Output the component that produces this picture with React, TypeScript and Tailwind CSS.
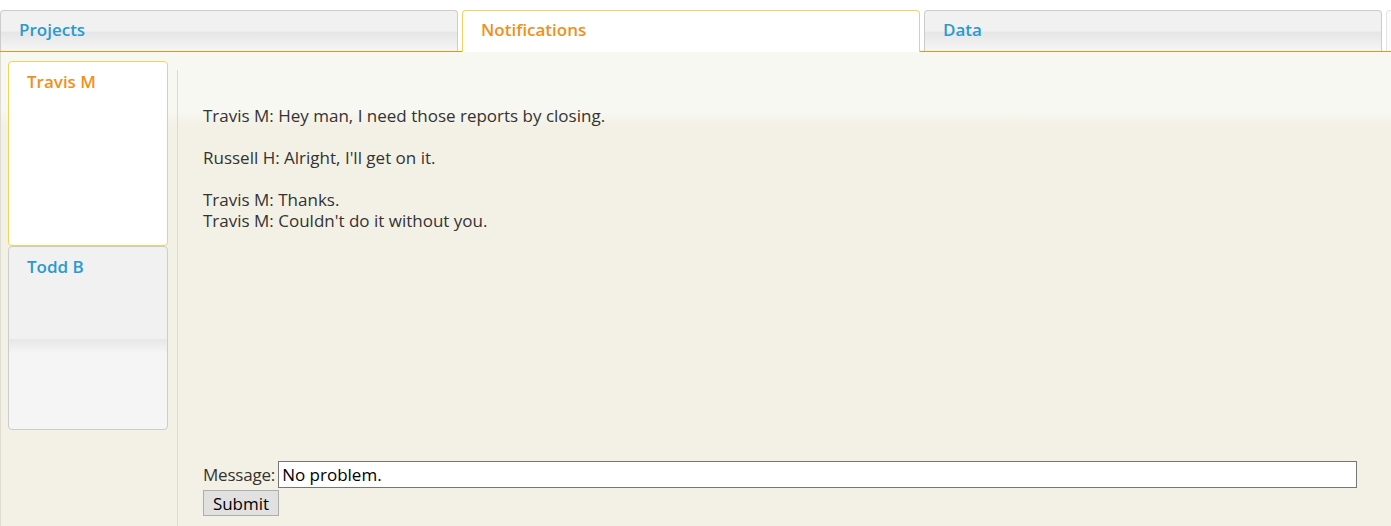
import { useState } from "react";

const tabs = ["Projects", "Notifications", "Data", ""];
const contacts = ["Travis M", "Todd B"];

const inactiveTab =
  "bg-[linear-gradient(#f1f1f1_0%,#f1f1f1_50%,#e6e6e6_53%,#f5f5f5_100%)] border-[#cccccc] text-[#2a9ad0]";

function App() {
  const [activeTab, setActiveTab] = useState("Notifications");
  const [activeContact, setActiveContact] = useState("Travis M");
  const [message, setMessage] = useState("No problem.");

  return (
    <div className="h-[526px] w-[1391px] overflow-hidden bg-white font-['Open_Sans','Liberation_Sans',sans-serif] text-[17px] text-[#333]">
      {/* top tabs */}
      <div className="flex items-end gap-[4px] pt-[10px] border-b border-[#e0951d] h-[52px]">
        {tabs.map((tab, i) => (
          <div
            key={i}
            onClick={() => tab && setActiveTab(tab)}
            className={`shrink-0 w-[458px] rounded-t-[4px] border border-b-0 pl-[18px] pt-[6px] font-semibold cursor-pointer ${
              activeTab === tab
                ? "h-[42px] -mb-px bg-white border-[#f5d25c] text-[#f0901c]"
                : i === 3
                ? "h-[41px] bg-[#fbfbfb] border-[#e4e4e4]"
                : `h-[41px] ${inactiveTab}`
            }`}
          >
            {tab}
          </div>
        ))}
      </div>

      {/* content */}
      <div className="flex h-[474px] border-l border-[#dedcd2] bg-[linear-gradient(#f8f8f3_0px,#f8f8f3_58px,#f3f1e5_74px,#f3f1e5_100%)]">
        <div className="w-[176px] shrink-0 pl-[7px] pt-[9px]">
          {contacts.map((c) => (
            <div
              key={c}
              onClick={() => setActiveContact(c)}
              className={`w-[160px] rounded-[4px] border pl-[18px] pt-[7px] font-semibold cursor-pointer ${
                activeContact === c
                  ? "h-[185px] bg-white border-[#f5d25c] text-[#f0901c]"
                  : "h-[184px] border-[#cccccc] text-[#2a9ad0] bg-[linear-gradient(#f1f1f1_0%,#f1f1f1_50%,#e7e7e7_51%,#f5f5f5_58%,#f5f5f5_100%)]"
              }`}
            >
              {c}
            </div>
          ))}
        </div>

        <div className="mt-[18px] w-px bg-[#dcdad2]" />

        <div className="flex flex-1 flex-col pl-[25px] pr-[34px] pb-[10px] leading-[21px]">
          <div className="pt-[53px]">
            <p>Travis M: Hey man, I need those reports by closing.</p>
            <br />
            <p>Russell H: Alright, I'll get on it.</p>
            <br />
            <p>Travis M: Thanks.</p>
            <p>Travis M: Couldn't do it without you.</p>
          </div>
          <div className="flex-1" />
          <div className="flex items-center gap-[3px]">
            <label htmlFor="msg" className="tracking-[-0.2px]">Message:</label>
            <input
              id="msg"
              value={message}
              onChange={(e) => setMessage(e.target.value)}
              className="h-[27px] flex-1 border border-[#767676] bg-white px-[3px] text-[17px] text-black outline-none"
            />
          </div>
          <div className="mt-[2px]">
            <button className="h-[26px] w-[76px] border border-[#adadad] bg-[#e1e1e1] text-[17px] leading-none text-black">
              Submit
            </button>
          </div>
        </div>
      </div>
    </div>
  );
}

export default App;
